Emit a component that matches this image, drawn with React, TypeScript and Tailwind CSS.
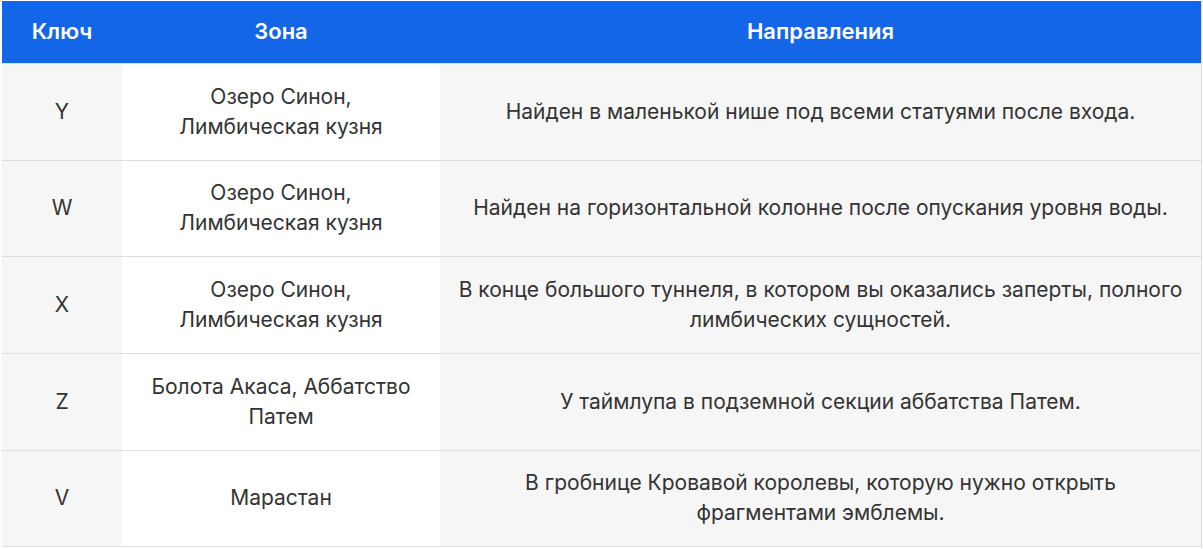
const rows = [
  {
    key: "Y",
    h: "h-[97px]",
    zone: ["Озеро Синон,", "Лимбическая кузня"],
    dir: ["Найден в маленькой нише под всеми статуями после входа."],
  },
  {
    key: "W",
    h: "h-[96px]",
    zone: ["Озеро Синон,", "Лимбическая кузня"],
    dir: ["Найден на горизонтальной колонне после опускания уровня воды."],
  },
  {
    key: "X",
    h: "h-[97px]",
    zone: ["Озеро Синон,", "Лимбическая кузня"],
    dir: [
      "В конце большого туннеля, в котором вы оказались заперты, полного",
      "лимбических сущностей.",
    ],
  },
  {
    key: "Z",
    h: "h-[97px]",
    zone: ["Болота Акаса, Аббатство", "Патем"],
    dir: ["У таймлупа в подземной секции аббатства Патем."],
  },
  {
    key: "V",
    h: "h-[96px]",
    zone: ["Марастан"],
    dir: [
      "В гробнице Кровавой королевы, которую нужно открыть",
      "фрагментами эмблемы.",
    ],
  },
];

export default function App() {
  return (
    <div
      className="w-[1203px] h-[549px] bg-white pl-[2px] pt-[1px]"
      style={{ fontFamily: "Inter, 'Noto Sans', sans-serif" }}
    >
      <table className="w-[1200px] border-collapse table-fixed border-r border-b border-[#dedede]">
        <colgroup>
          <col className="w-[120px]" />
          <col className="w-[318px]" />
          <col />
        </colgroup>
        <thead>
          <tr className="bg-[#1466e8] text-white h-[62px] text-[22px]">
            <th className="font-semibold">Ключ</th>
            <th className="font-semibold">Зона</th>
            <th className="font-semibold">Направления</th>
          </tr>
        </thead>
        <tbody className="text-[21px] leading-[30px] text-[#333333]">
          {rows.map((r) => (
            <tr key={r.key} className={`border-t border-[#dedede] ${r.h}`}>
              <td className="bg-[#f6f6f6] text-center">{r.key}</td>
              <td className="bg-white text-center px-2">
                {r.zone.map((l) => (
                  <div key={l} className="whitespace-nowrap">{l}</div>
                ))}
              </td>
              <td className="bg-[#f6f6f6] text-center px-2">
                {r.dir.map((l) => (
                  <div key={l} className="whitespace-nowrap">{l}</div>
                ))}
              </td>
            </tr>
          ))}
        </tbody>
      </table>
    </div>
  );
}
